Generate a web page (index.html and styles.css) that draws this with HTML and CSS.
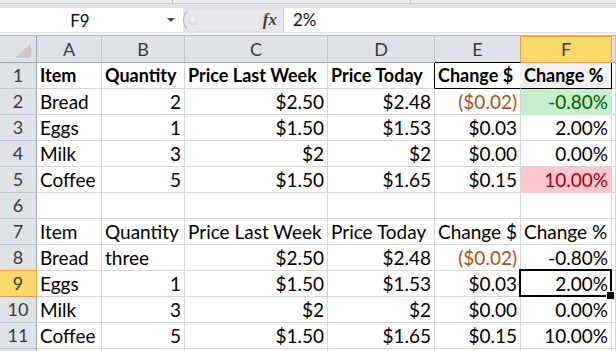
FILE: index.html
```html
<!DOCTYPE html>
<html lang="en">
<head>
    <meta charset="UTF-8">
    <meta name="viewport" content="width=device-width, initial-scale=1.0">
    <title>Price Changes</title>
    <link rel="stylesheet" href="styles.css">
</head>
<body>
    <div class="ribbon-edge">
        <span class="group g1"></span>
        <span class="group g2"></span>
    </div>

    <div class="formula-bar">
        <div class="name-box">
            <span class="name">F9</span>
            <span class="caret"></span>
        </div>
        <div class="splitter">
            <span class="knob"></span>
            <span class="fx">fx</span>
        </div>
        <div class="formula-input">2%</div>
    </div>
    <div class="bar-sep"></div>

    <div class="sheet">
        <!-- column headers -->
        <div class="ch corner">
            <svg width="17" height="16" viewBox="0 0 17 16"><polygon points="16,0 16,15 0,15" fill="#cbcac6"/></svg>
        </div>
        <div class="ch">A</div>
        <div class="ch">B</div>
        <div class="ch">C</div>
        <div class="ch ch-d">D</div>
        <div class="ch ch-e">E</div>
        <div class="ch ch-active">F</div>
        <div class="ch ch-rest"></div>

        <!-- row 1 -->
        <div class="rh">1</div>
        <div class="c b">Item</div>
        <div class="c b">Quantity</div>
        <div class="c b">Price Last Week</div>
        <div class="c b box-left">Price Today</div>
        <div class="c b box-mid">Change $</div>
        <div class="c b box-end">Change %</div>
        <div class="c rest"></div>

        <!-- row 2 -->
        <div class="rh">2</div>
        <div class="c">Bread</div>
        <div class="c r">2</div>
        <div class="c r">$2.50</div>
        <div class="c r">$2.48</div>
        <div class="c r neg">($0.02)</div>
        <div class="c r good">-0.80%</div>
        <div class="c rest"></div>

        <!-- row 3 -->
        <div class="rh">3</div>
        <div class="c">Eggs</div>
        <div class="c r">1</div>
        <div class="c r">$1.50</div>
        <div class="c r">$1.53</div>
        <div class="c r">$0.03</div>
        <div class="c r">2.00%</div>
        <div class="c rest"></div>

        <!-- row 4 -->
        <div class="rh">4</div>
        <div class="c">Milk</div>
        <div class="c r">3</div>
        <div class="c r">$2</div>
        <div class="c r">$2</div>
        <div class="c r">$0.00</div>
        <div class="c r">0.00%</div>
        <div class="c rest"></div>

        <!-- row 5 -->
        <div class="rh">5</div>
        <div class="c">Coffee</div>
        <div class="c r">5</div>
        <div class="c r">$1.50</div>
        <div class="c r">$1.65</div>
        <div class="c r">$0.15</div>
        <div class="c r bad">10.00%</div>
        <div class="c rest"></div>

        <!-- row 6 -->
        <div class="rh">6</div>
        <div class="c"></div>
        <div class="c"></div>
        <div class="c"></div>
        <div class="c"></div>
        <div class="c"></div>
        <div class="c"></div>
        <div class="c rest"></div>

        <!-- row 7 -->
        <div class="rh">7</div>
        <div class="c">Item</div>
        <div class="c">Quantity</div>
        <div class="c">Price Last Week</div>
        <div class="c">Price Today</div>
        <div class="c">Change $</div>
        <div class="c">Change %</div>
        <div class="c rest"></div>

        <!-- row 8 -->
        <div class="rh rh-above">8</div>
        <div class="c">Bread</div>
        <div class="c">three</div>
        <div class="c r">$2.50</div>
        <div class="c r">$2.48</div>
        <div class="c r neg">($0.02)</div>
        <div class="c r">-0.80%</div>
        <div class="c rest"></div>

        <!-- row 9 (active row) -->
        <div class="rh rh-active">9</div>
        <div class="c">Eggs</div>
        <div class="c r">1</div>
        <div class="c r">$1.50</div>
        <div class="c r">$1.53</div>
        <div class="c r">$0.03</div>
        <div class="c r selected">2.00%</div>
        <div class="c rest"></div>

        <!-- row 10 -->
        <div class="rh">10</div>
        <div class="c">Milk</div>
        <div class="c r">3</div>
        <div class="c r">$2</div>
        <div class="c r">$2</div>
        <div class="c r">$0.00</div>
        <div class="c r">0.00%</div>
        <div class="c rest"></div>

        <!-- row 11 -->
        <div class="rh">11</div>
        <div class="c">Coffee</div>
        <div class="c r">5</div>
        <div class="c r">$1.50</div>
        <div class="c r">$1.65</div>
        <div class="c r">$0.15</div>
        <div class="c r">10.00%</div>
        <div class="c rest"></div>

        <!-- row 12, only its top edge is in view -->
        <div class="rh edge"></div>
        <div class="c edge"></div>
        <div class="c edge"></div>
        <div class="c edge"></div>
        <div class="c edge"></div>
        <div class="c edge"></div>
        <div class="c edge"></div>
        <div class="c rest edge"></div>
    </div>
</body>
</html>
```

FILE: styles.css
```css
* {
    margin: 0;
    padding: 0;
    box-sizing: border-box;
}

body {
    width: 616px;
    height: 351px;
    overflow: hidden;
    background: #ffffff;
    font-family: Lato, 'Liberation Sans', sans-serif;
    color: #000;
}

/* bottom edge of the ribbon */
.ribbon-edge {
    height: 4px;
    display: flex;
    background: #eceef1;
    border-bottom: 1px solid #c6cacf;
}

.ribbon-edge .group {
    border-right: 1px solid #b8bdc4;
}

.ribbon-edge .g1 {
    width: 173px;
}

.ribbon-edge .g2 {
    width: 238px;
}

/* formula bar */
.formula-bar {
    height: 29px;
    padding: 4px 0 1px;
    display: flex;
    background: #dfe2e7;
}

.name-box {
    width: 183px;
    background: #fff;
    display: flex;
    align-items: center;
}

.name {
    width: 160px;
    text-align: center;
    font-size: 17px;
    color: #111;
}

.caret {
    margin-left: 7px;
    width: 0;
    height: 0;
    border-left: 4px solid transparent;
    border-right: 4px solid transparent;
    border-top: 4px solid #5a4334;
}

.splitter {
    width: 100px;
    display: flex;
    align-items: center;
    background: #e6e8eb;
    border: 1px solid #b3b8bf;
    border-right: none;
    border-top-color: #dfe2e7;
    border-bottom-color: #dfe2e7;
    border-radius: 12px 0 0 12px;
}

.knob {
    margin-left: 4px;
    width: 10px;
    height: 10px;
    border-radius: 50%;
    background: radial-gradient(circle at 50% 40%, #f4f5f6 0, #d9dcdf 70%, #c9ccd0 100%);
}

.fx {
    margin-left: auto;
    margin-right: 6px;
    font-family: 'Liberation Serif', serif;
    font-style: italic;
    font-weight: bold;
    font-size: 17px;
    color: #4e3a2c;
}

.formula-input {
    flex: 1;
    background: #fff;
    border-left: 1px solid #c8ccd1;
    padding-left: 9px;
    font-size: 17px;
    line-height: 24px;
    color: #111;
}

.bar-sep {
    height: 3px;
    background: #f4f5f7;
    border-bottom: 1px solid #b4b9c0;
}

/* worksheet grid */
.sheet {
    display: grid;
    grid-template-columns: 37px 65px 83px 143px 107px 86px 91px 1fr;
    grid-template-rows: 27px repeat(11, 26px) 2px;
    font-size: 18px;
}

.ch,
.rh {
    background: #dfe2e7;
    color: #3a3a3a;
    text-align: center;
    border-right: 1px solid #bfc4ca;
    border-bottom: 1px solid #bfc4ca;
}

.ch {
    line-height: 26px;
    border-bottom-color: #9da3ab;
}

.corner {
    display: flex;
    align-items: flex-end;
    justify-content: flex-end;
    padding: 0 4px 3px 0;
    border-right-color: #9da3ab;
}

.corner svg {
    display: block;
}

.ch-e {
    border-bottom-color: #000;
    border-right-color: #f0a040;
}

.ch-active {
    background: #fcd96b;
    border-right-color: #f0a040;
    border-bottom-color: #f0a040;
    box-shadow: inset 0 1px 0 #f0a040;
}

.rh {
    line-height: 25px;
    border-right-color: #9da3ab;
}

.rh-above {
    border-bottom-color: #f0a040;
}

.rh-active {
    background: #fcd96b;
    border-right-color: #f0a040;
    border-bottom-color: #f0a040;
}

.c {
    padding: 0 3px;
    font-size: 19px;
    line-height: 25px;
    white-space: nowrap;
    border-right: 1px solid #d6d6d6;
    border-bottom: 1px solid #d6d6d6;
}

.c.b {
    font-size: 18px;
    font-weight: bold;
}

.c.r {
    text-align: right;
}

.c.rest {
    padding: 0;
}

/* last row is cut by the window, keep it a plain strip */
.edge {
    border-bottom: none;
}

.box-left {
    border-right-color: #000;
}

.box-mid {
    border-bottom-color: #000;
    border-right-color: #f0f0f0;
}

.box-end {
    background: #f0f0f0;
    border-bottom-color: #000;
    border-right-color: #000;
}

.neg {
    color: #ae4f14;
}

.good {
    background: #c6efce;
    color: #006100;
    border-color: #c6efce;
}

.bad {
    background: #ffc7ce;
    color: #9c0006;
    border-color: #ffc7ce;
}

/* active cell outline and fill handle */
.selected {
    position: relative;
}

.selected::after {
    content: "";
    position: absolute;
    left: -2px;
    top: -2px;
    right: -1px;
    bottom: -1px;
    border: 2px solid #000;
}

.selected::before {
    content: "";
    position: absolute;
    right: -4px;
    bottom: -4px;
    width: 7px;
    height: 7px;
    background: #000;
    border: 1px solid #fff;
    z-index: 2;
}
```
